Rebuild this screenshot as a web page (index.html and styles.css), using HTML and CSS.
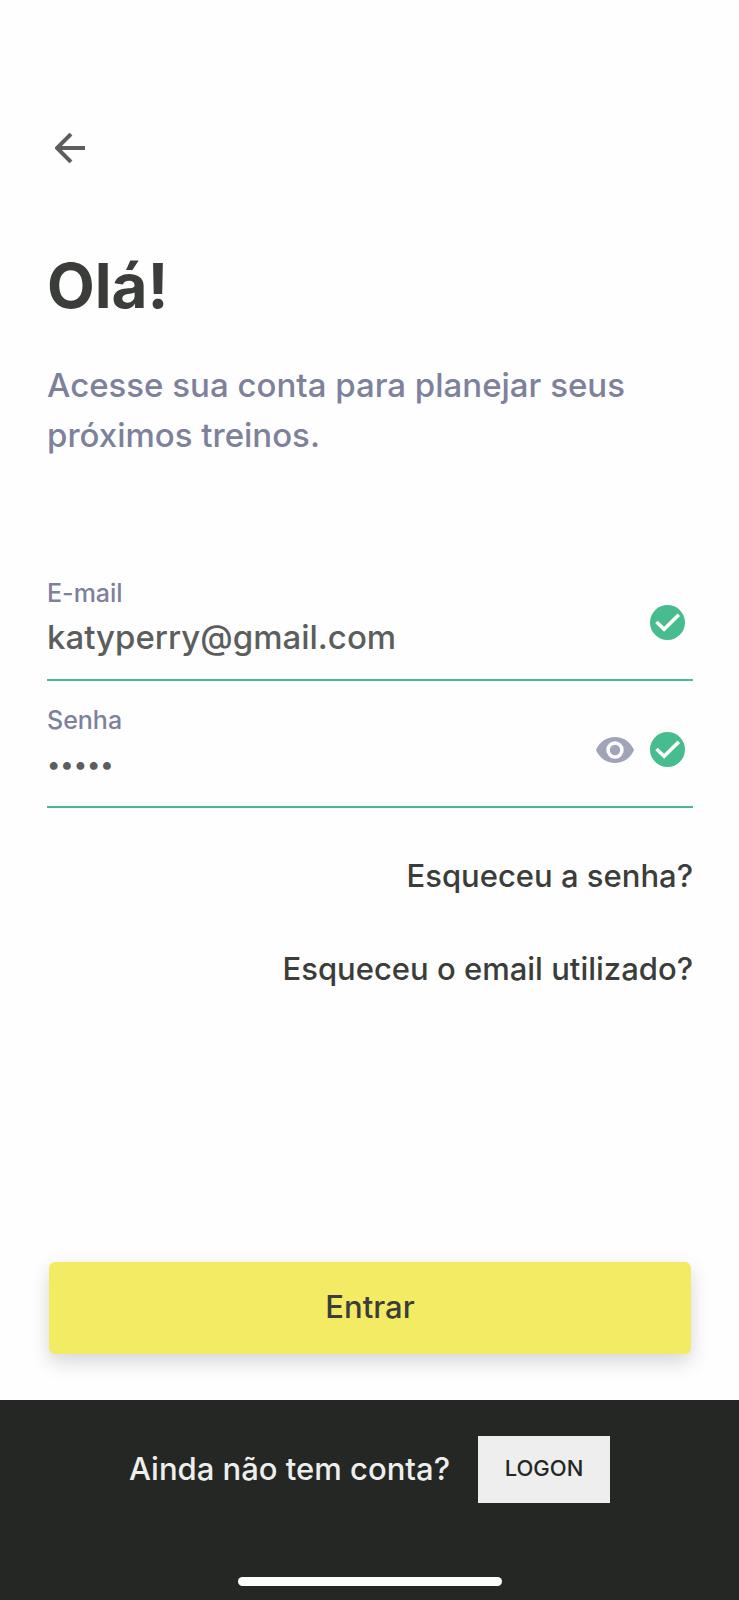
FILE: index.html
```html
<!DOCTYPE html>
<html lang="pt-BR">
<head>
<meta charset="utf-8">
<meta name="viewport" content="width=device-width, initial-scale=1">
<title>Entrar</title>
<link rel="stylesheet" href="styles.css">
</head>
<body>
<main class="login">
  <button class="icon-button back" type="button" aria-label="Voltar">
    <svg class="arrow" viewBox="0 0 30 30" aria-hidden="true"><path d="M30 15H2M16 1L2 15l14 14"/></svg>
  </button>
  <h1 class="title">Olá!</h1>
  <p class="subtitle">Acesse sua conta para planejar seus próximos treinos.</p>
  <form class="form">
    <div class="field">
      <div class="entry">
        <label class="label" for="email">E-mail</label>
        <input class="input" id="email" type="email" value="katyperry@gmail.com">
      </div>
      <svg class="check" viewBox="0 0 34 34" aria-hidden="true"><circle cx="17" cy="17" r="17"/><path d="M6.300 16.500l7.400 7L28 9.500"/></svg>
    </div>
    <div class="field">
      <div class="entry">
        <label class="label" for="senha">Senha</label>
        <input class="input password" id="senha" type="password" value="12345">
      </div>
      <button class="icon-button" type="button" aria-label="Mostrar senha">
        <svg class="eye" viewBox="0 0 38 26" aria-hidden="true"><path fill-rule="evenodd" d="M19 0C10.500 0 3.200 5.300 0 13c3.200 7.700 10.500 13 19 13s15.800-5.300 19-13C34.800 5.300 27.500 0 19 0zM19 21.700a8.700 8.700 0 1 1 0-17.400a8.700 8.700 0 0 1 0 17.400zM19 7.800a5.200 5.200 0 1 0 0 10.400a5.200 5.200 0 0 0 0-10.400z"/></svg>
      </button>
      <svg class="check" viewBox="0 0 34 34" aria-hidden="true"><circle cx="17" cy="17" r="17"/><path d="M6.300 16.500l7.400 7L28 9.500"/></svg>
    </div>
    <div class="links">
      <a class="link" href="#senha">Esqueceu a senha?</a>
      <a class="link" href="#email">Esqueceu o email utilizado?</a>
    </div>
    <button class="submit" type="submit">Entrar</button>
  </form>
</main>
<footer class="footer">
  <div class="signup">
    <span class="question">Ainda não tem conta?</span>
    <button class="logon" type="button">LOGON</button>
  </div>
  <div class="home-bar"></div>
</footer>
</body>
</html>
```
FILE: styles.css
```css
* {
  box-sizing: border-box;
}

body {
  display: flex;
  flex-direction: column;
  min-height: 100vh;
  margin: 0;
  background: #fefefe;
  color: #3a3d39;
  font-family: Inter, "Liberation Sans", sans-serif;
  font-weight: 500;
}

button,
input {
  padding: 0;
  border: 0;
  border-radius: 0;
  background: none;
  color: inherit;
  font: inherit;
}

svg {
  display: block;
}

.login {
  display: flex;
  flex: 1;
  flex-direction: column;
  padding: 124px 46px 46px 47px;
}

.icon-button {
  display: flex;
  align-items: center;
  justify-content: center;
  height: 48px;
}

.back {
  align-self: flex-start;
  padding: 0 8px;
}

.arrow {
  width: 30px;
  height: 30px;
  fill: none;
  stroke: #5c5e5e;
  stroke-width: 4;
}

.title {
  margin: 78px 0 0;
  font-size: 62px;
  font-weight: 700;
  line-height: 72px;
}

.subtitle {
  margin: 38px 0 0;
  color: #7d819b;
  font-size: 33px;
  line-height: 50px;
}

.form {
  display: flex;
  flex: 1;
  flex-direction: column;
  margin-top: 94px;
}

.field {
  display: flex;
  align-items: center;
  gap: 16px;
  height: 127px;
  padding: 12px 8px 0 0;
  border-bottom: 2px solid #4bb894;
}

.entry {
  display: flex;
  flex: 1;
  flex-direction: column;
  min-width: 0;
  padding-bottom: 4px;
}

.label {
  color: #7d819b;
  font-size: 25px;
  line-height: 32px;
}

.input {
  width: 100%;
  height: 56px;
  color: #5c5e5e;
  font-size: 33px;
  outline: 0;
}

.password {
  font-size: 25px;
}

.check {
  width: 35px;
  height: 35px;
  fill: #47bc8e;
}

.check path {
  fill: none;
  stroke: #fefefe;
  stroke-width: 3.5;
}

.eye {
  width: 38px;
  height: 26px;
  fill: #a1a3b9;
}

.links {
  display: flex;
  flex-direction: column;
  align-items: flex-end;
  gap: 53px;
  margin: 48px 0;
}

.link {
  color: inherit;
  font-size: 31px;
  line-height: 40px;
  text-decoration: none;
}

.submit {
  height: 92px;
  margin: auto 2px 0;
  padding-bottom: 3px;
  border-radius: 6px;
  background: #f4eb65;
  box-shadow: 0 8px 20px rgb(0 0 0 / 16%);
  font-size: 31px;
}

.footer {
  display: flex;
  flex-direction: column;
  align-items: center;
  justify-content: space-between;
  height: 200px;
  padding: 36px 16px 14px;
  background: #242723;
}

.signup {
  display: flex;
  align-items: center;
  gap: 28px;
  color: #eeefed;
  font-size: 31px;
}

.question {
  padding-bottom: 3px;
}

.logon {
  width: 132px;
  height: 67px;
  padding-bottom: 3px;
  background: #eee;
  color: #242723;
  font-size: 22px;
}

.home-bar {
  width: 264px;
  height: 9px;
  border-radius: 5px;
  background: #fff;
}
```
